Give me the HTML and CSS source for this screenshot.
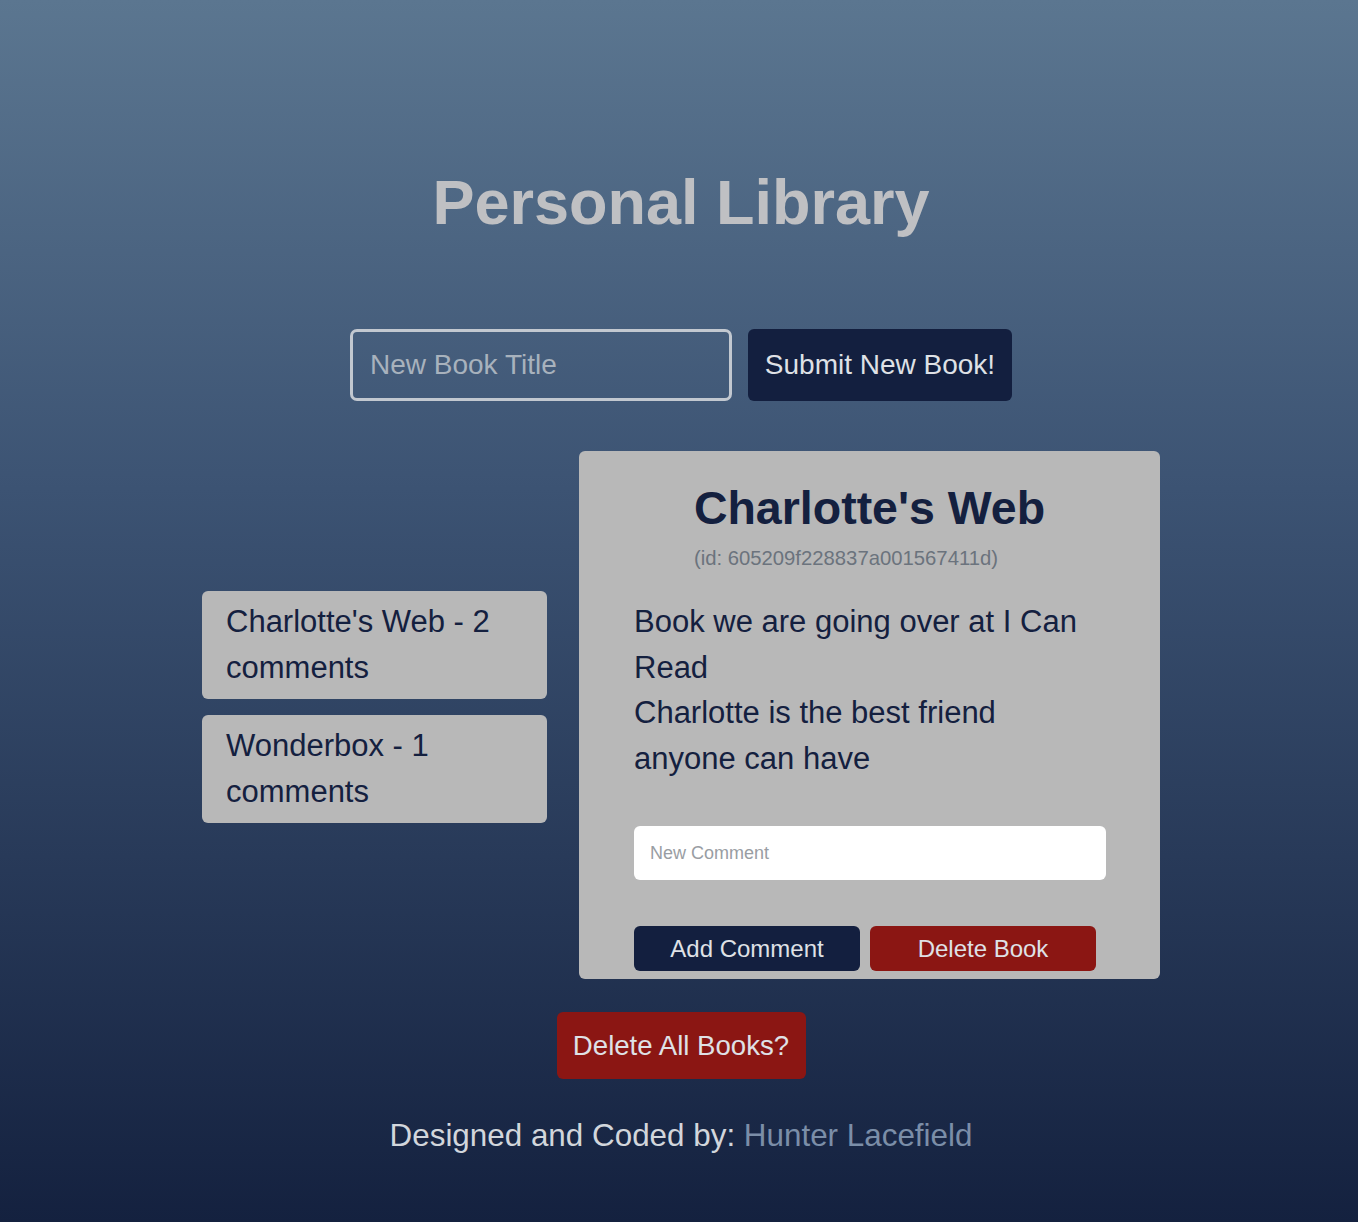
FILE: index.html
```html
<!DOCTYPE html>
<html lang="en">
<head>
<meta charset="utf-8">
<title>Personal Library</title>
<link rel="stylesheet" href="styles.css">
</head>
<body>
<div class="page">
  <h1 class="title">Personal Library</h1>

  <form class="new-book">
    <input class="book-input" type="text" placeholder="New Book Title">
    <button class="btn btn-navy btn-submit" type="button">Submit New Book!</button>
  </form>

  <main class="library">
    <ul class="book-list">
      <li class="book-item">Charlotte's Web - 2 comments</li>
      <li class="book-item">Wonderbox - 1 comments</li>
    </ul>

    <section class="detail">
      <div class="detail-head">
        <h2 class="detail-title">Charlotte's Web</h2>
        <p class="detail-id">(id: 605209f228837a001567411d)</p>
      </div>
      <ul class="comments">
        <li>Book we are going over at I Can Read</li>
        <li>Charlotte is the best friend anyone can have</li>
      </ul>
      <input class="comment-input" type="text" placeholder="New Comment">
      <div class="detail-actions">
        <button class="btn btn-navy btn-small" type="button">Add Comment</button>
        <button class="btn btn-red btn-small" type="button">Delete Book</button>
      </div>
    </section>
  </main>

  <div class="delete-all-row">
    <button class="btn btn-red btn-delete-all" type="button">Delete All Books?</button>
  </div>

  <footer class="footer">Designed and Coded by: <a class="footer-link" href="#">Hunter Lacefield</a></footer>
</div>
</body>
</html>
```

FILE: styles.css
```css
html, body {
  margin: 0;
  padding: 0;
}

body {
  min-height: 1222px;
  background: linear-gradient(to bottom, #5b7690 0%, #3c5373 40%, #14213f 100%);
  font-family: "Liberation Sans", Arial, sans-serif;
  color: #14203f;
}

.page {
  display: flex;
  flex-direction: column;
  align-items: center;
  padding-top: 165px;
  padding-left: 4px;
}

.title {
  margin: 0;
  font-size: 63px;
  line-height: 74px;
  font-weight: bold;
  color: #bfc0c3;
}

.new-book {
  display: flex;
  gap: 16px;
  margin-top: 90px;
}

.book-input {
  box-sizing: border-box;
  width: 382px;
  height: 72px;
  border: 3px solid #c2c8d0;
  border-radius: 7px;
  background: transparent;
  padding: 0 17px;
  font-family: "Liberation Sans", Arial, sans-serif;
  font-size: 28px;
  color: #d8dde3;
  outline: none;
}

.book-input::placeholder {
  color: #a8b2bd;
}

.btn {
  border: none;
  border-radius: 6px;
  font-family: "Liberation Sans", Arial, sans-serif;
  color: #dfe1e6;
  cursor: pointer;
  padding: 0;
}

.btn-navy {
  background: #131f3f;
}

.btn-red {
  background: #8b1613;
}

.btn-submit {
  width: 264px;
  height: 72px;
  font-size: 28px;
}

.library {
  display: flex;
  align-items: center;
  gap: 32px;
  margin-top: 50px;
}

.book-list {
  list-style: none;
  margin: 0 0 16px 0;
  padding: 0;
  display: flex;
  flex-direction: column;
  gap: 16px;
}

.book-item {
  box-sizing: border-box;
  width: 345px;
  background: #b8b8b8;
  border-radius: 6px;
  padding: 8px 40px 8px 24px;
  font-size: 31px;
  line-height: 46px;
  color: #14203f;
}

.detail {
  box-sizing: border-box;
  width: 581px;
  background: #b8b8b8;
  border-radius: 6px;
  padding: 30px 55px 8px 55px;
  display: flex;
  flex-direction: column;
}

.detail-head {
  align-self: center;
  display: flex;
  flex-direction: column;
  align-items: flex-start;
}

.detail-title {
  margin: 0;
  font-size: 46.5px;
  line-height: 54px;
  font-weight: bold;
  color: #14203f;
}

.detail-id {
  margin: 9px 0 0 0;
  font-size: 20.3px;
  line-height: 28px;
  color: #6b737d;
}

.comments {
  list-style: none;
  margin: 27px 0 0 0;
  padding: 0;
  font-size: 31px;
  line-height: 45.6px;
  color: #14203f;
}

.comment-input {
  box-sizing: border-box;
  margin-top: 45px;
  width: 472px;
  height: 54px;
  border: none;
  border-radius: 6px;
  background: #ffffff;
  padding: 0 16px;
  font-family: "Liberation Sans", Arial, sans-serif;
  font-size: 18px;
  color: #333;
  outline: none;
}

.comment-input::placeholder {
  color: #999da3;
}

.detail-actions {
  display: flex;
  gap: 10px;
  margin-top: 46px;
}

.btn-small {
  width: 226px;
  height: 45px;
  font-size: 24px;
}

.delete-all-row {
  margin-top: 33px;
}

.btn-delete-all {
  width: 249px;
  height: 67px;
  font-size: 27.6px;
}

.footer {
  margin-top: 37px;
  font-size: 31.4px;
  line-height: 40px;
  color: #d2d6dc;
}

.footer-link {
  color: #7b8ea8;
  text-decoration: none;
}
```
